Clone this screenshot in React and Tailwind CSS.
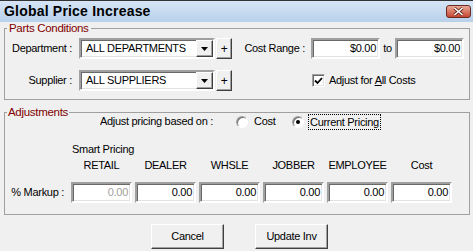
import React from 'react'

const sunken =
  'border-2 border-t-[#a0a0a0] border-l-[#a0a0a0] border-b-[#ffffff] border-r-[#ffffff] shadow-[inset_1px_1px_0_#696969,inset_-1px_-1px_0_#e3e3e3] bg-white'
const raised =
  'border border-t-[#ffffff] border-l-[#ffffff] border-b-[#404040] border-r-[#404040] shadow-[inset_-1px_-1px_0_#a0a0a0] bg-[#f0f0f0]'

const Combo = ({ value }) => (
  <div className={`flex items-center w-[136px] h-[21px] ${sunken}`}>
    <span className="flex-1 pl-[5px] leading-none">{value}</span>
    <div className={`flex items-center justify-center w-[17px] h-full ${raised}`}>
      <svg width="7" height="4" viewBox="0 0 7 4">
        <path d="M0 0h7L3.5 4z" fill="#000" />
      </svg>
    </div>
  </div>
)

const Plus = () => (
  <div className={`flex items-center justify-center ml-[1px] w-[16px] h-[21px] text-[12px] ${raised}`}>+</div>
)

const Field = ({ value, w = 'w-[69px]', muted }) => (
  <div className={`flex items-center justify-end pr-[2px] h-[21px] ${w} ${sunken} ${muted ? 'text-[#a0a0a0]' : ''}`}>
    {value}
  </div>
)

const Radio = ({ on }) => (
  <span className="flex items-center justify-center w-[12px] h-[12px] rounded-full border border-t-[#a0a0a0] border-l-[#a0a0a0] border-b-[#ffffff] border-r-[#ffffff] bg-white shadow-[inset_1px_1px_0_#696969]">
    {on && <span className="w-[4px] h-[4px] rounded-full bg-black" />}
  </span>
)

const cols = ['RETAIL', 'DEALER', 'WHSLE', 'JOBBER', 'EMPLOYEE', 'Cost']

export default function App() {
  return (
    <div className="w-[473px] h-[251px] overflow-hidden bg-[#f0f0f0] text-black text-[11px] tracking-[-0.3px] font-['Liberation_Sans',Arial,sans-serif]">
      {/* title bar */}
      <div className="flex items-center justify-between h-[22px] border-t border-[#333333] bg-gradient-to-b from-[#d6e5f6] to-[#b8d0ea] pl-[4px] pr-[2px]">
        <span className="text-[14px] font-bold tracking-[0.2px]">Global Price Increase</span>
        <div className="flex items-center justify-center w-[25px] h-[13px] rounded-[3px] border border-[#6b2a20] bg-gradient-to-b from-[#e9a898] to-[#c4452f]">
          <svg width="11" height="9" viewBox="0 0 11 9">
            <path d="M1.5 1l8 7M9.5 1l-8 7" stroke="#5a2018" strokeWidth="3" />
            <path d="M1.5 1l8 7M9.5 1l-8 7" stroke="#fff" strokeWidth="1.6" />
          </svg>
        </div>
      </div>

      {/* Parts Conditions */}
      <fieldset className="ml-[4px] w-[466px] border border-[#a0a0a0] pt-[4px] pb-[8px]">
        <legend className="ml-[2px] px-[2px] leading-[12px] text-[11.5px] text-[#800000]">Parts Conditions</legend>
        <div className="flex items-center h-[21px]">
          <span className="w-[67px] text-right">Department :</span>
          <div className="ml-[7px]"><Combo value="ALL DEPARTMENTS" /></div>
          <Plus />
          <span className="w-[73px] text-right">Cost Range :</span>
          <div className="ml-[6px]"><Field value="$0.00" /></div>
          <span className="w-[15px] text-center">to</span>
          <Field value="$0.00" />
        </div>
        <div className="flex items-center h-[21px] mt-[11px]">
          <span className="w-[67px] text-right">Supplier :</span>
          <div className="ml-[7px]"><Combo value="ALL SUPPLIERS" /></div>
          <Plus />
          <span className={`flex items-center justify-center ml-[80px] w-[13px] h-[13px] ${sunken} border-[1px]`}>
            <svg width="9" height="8" viewBox="0 0 9 8">
              <path d="M1 3.5l2.5 2.5L8 1" stroke="#000" strokeWidth="1.8" fill="none" />
            </svg>
          </span>
          <span className="ml-[4px]">Adjust for <span className="underline">A</span>ll Costs</span>
        </div>
      </fieldset>

      {/* Adjustments */}
      <fieldset className="ml-[4px] mt-[6px] w-[466px] border border-[#a0a0a0] pb-[11px]">
        <legend className="ml-[2px] px-[1px] leading-[12px] text-[11.5px] text-[#800000]">Adjustments</legend>
        <div className="flex items-center h-[13px] -mt-[3px]">
          <span className="ml-[95px] w-[136px]">Adjust pricing based on :</span>
          <Radio />
          <span className="ml-[6px] w-[38px]">Cost</span>
          <Radio on />
          <span className="ml-[4px] px-[1px] border border-dotted border-black leading-[14px]">Current Pricing</span>
        </div>
        <div className="ml-[67px] mt-[15px] leading-[13px]">Smart Pricing</div>
        <div className="flex ml-[66px] mt-[3px] gap-[3px] leading-[13px]">
          {cols.map((c) => (
            <span key={c} className="w-[61px] text-center">{c}</span>
          ))}
        </div>
        <div className="flex items-center mt-[10px]">
          <span className="w-[59px] text-right">% Markup :</span>
          <div className="flex ml-[7px] gap-[3px]">
            {cols.map((c, i) => (
              <Field key={c} value="0.00" w="w-[61px]" muted={i === 0} />
            ))}
          </div>
        </div>
      </fieldset>

      {/* buttons */}
      <div className="flex mt-[9px] pl-[151px] gap-[31px]">
        <button className={`w-[73px] h-[25px] text-[11px] ${raised}`}>Cancel</button>
        <button className={`w-[73px] h-[25px] text-[11px] ${raised}`}>Update Inv</button>
      </div>
    </div>
  )
}
